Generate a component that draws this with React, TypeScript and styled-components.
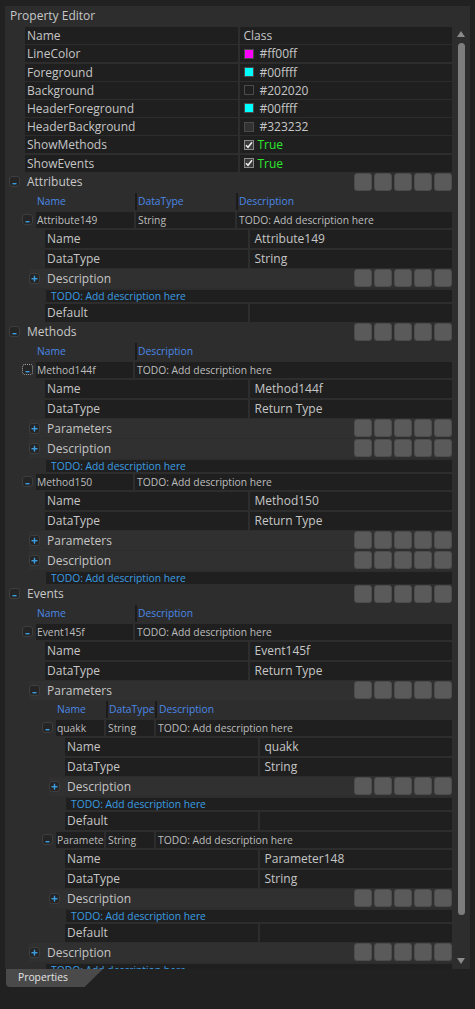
import React from "react";
import styled, { createGlobalStyle } from "styled-components";

const GlobalStyle = createGlobalStyle`
  html, body {
    margin: 0;
    padding: 0;
    background: #212121;
  }
  body {
    font-family: "Open Sans", "Noto Sans", sans-serif;
    color: #c8c8c8;
  }
  * {
    box-sizing: border-box;
  }
`;

const Screen = styled.div`
  width: 475px;
  height: 1009px;
  padding: 6px 5px 0 5px;
  background: #212121;
  overflow: hidden;
`;

const Panel = styled.div`
  height: 963px;
  background: #2d2d2d;
  display: flex;
  flex-direction: column;
`;

const TitleBar = styled.div`
  height: 20px;
  padding-left: 5px;
  font-size: 12px;
  line-height: 19px;
  color: #c8c8c8;
`;

const Body = styled.div`
  flex: 1;
  min-height: 0;
  display: flex;
`;

const Content = styled.div`
  flex: 1;
  min-width: 0;
  overflow: hidden;
`;

const ScrollBar = styled.div`
  width: 18px;
  flex: none;
  display: flex;
  flex-direction: column;
  align-items: center;
`;

const Arrow = styled.div<{ $dir: "up" | "down" }>`
  width: 0;
  height: 0;
  border-left: 4px solid transparent;
  border-right: 4px solid transparent;
  ${({ $dir }) =>
    $dir === "up"
      ? "border-bottom: 6px solid #8a8a8a; margin-top: 5px;"
      : "border-top: 6px solid #8a8a8a; margin-bottom: 5px;"}
`;

const Thumb = styled.div`
  width: 7px;
  flex: 1;
  margin: 6px 0 43px;
  background: #7d7d7d;
  border-radius: 4px;
`;

/* top level property rows */
const PropRow = styled.div`
  display: grid;
  grid-template-columns: 1fr 1fr;
  column-gap: 2px;
  height: 17px;
  margin: 1.2px 0 0 20px;
`;

const Cell = styled.div<{ $pad?: number; $small?: boolean; $color?: string }>`
  display: flex;
  align-items: center;
  min-width: 0;
  overflow: hidden;
  white-space: nowrap;
  background: #1f1f1f;
  padding-left: ${({ $pad }) => $pad ?? 2}px;
  font-size: ${({ $small }) => ($small ? "10.3px" : "12px")};
  color: ${({ $color }) => $color ?? "#c6c6c6"};
`;

const Swatch = styled.span<{ $color: string }>`
  width: 10px;
  height: 10px;
  margin-right: 6px;
  flex: none;
  background: ${({ $color }) => $color};
  border: 1px solid #4a4a4a;
`;

const CheckBox = styled.span`
  width: 10px;
  height: 10px;
  margin-right: 4px;
  flex: none;
  display: flex;
  align-items: center;
  justify-content: center;
  background: #3a3a3a;
  border: 1px solid #8a8a8a;
`;

const TrueText = styled.span`
  color: #2ee62e;
`;

/* section / sub headers */
const SectionHeader = styled.div`
  height: 20px;
  display: flex;
  align-items: center;
  padding-left: 4px;
  font-size: 12px;
  color: #c8c8c8;
`;

const SubHeader = styled.div<{ $level: number }>`
  height: 19px;
  display: flex;
  align-items: center;
  margin: 1px 0 0 ${({ $level }) => 24 + $level * 20}px;
  background: #303030;
  font-size: 12px;
  color: #c6c6c6;
`;

const HeaderTitle = styled.span<{ $gap: number }>`
  flex: 1;
  margin-left: ${({ $gap }) => $gap}px;
  white-space: nowrap;
`;

const ButtonGroup = styled.div`
  display: flex;
  gap: 2px;
`;

const ToolButton = styled.div`
  width: 18px;
  height: 18px;
  border-radius: 3px;
  background: #5a5a5a;
  border: 1px solid #4c4c4c;
`;

const ToggleBox = styled.span<{ $focus?: boolean }>`
  width: 11px;
  height: 11px;
  flex: none;
  display: flex;
  border-radius: 3px;
  background: #252525;
  border: 1px ${({ $focus }) => ($focus ? "dotted #a8a8a8" : "solid #3e3e3e")};
`;

/* column headers and item rows */
const ColumnHeader = styled.div<{ $level: number; $cols: string }>`
  display: grid;
  grid-template-columns: ${({ $cols }) => $cols};
  height: 17px;
  margin: 1px 0 0 ${({ $level }) => 31 + $level * 20}px;
  font-size: 10.3px;
  line-height: 17px;
  color: #4a88e6;
`;

const HeaderCell = styled.div<{ $first?: boolean; $pad?: number }>`
  padding-left: ${({ $pad }) => $pad ?? 1}px;
  border-left: ${({ $first }) => ($first ? "none" : "2px solid #1b1b1b")};
  white-space: nowrap;
  overflow: hidden;
`;

const ItemRow = styled.div<{ $level: number }>`
  display: flex;
  align-items: center;
  height: 16px;
  margin: 2px 0 0 ${({ $level }) => 17 + $level * 20}px;
`;

const ItemCells = styled.div<{ $cols: string }>`
  flex: 1;
  height: 100%;
  margin-left: 3px;
  display: grid;
  grid-template-columns: ${({ $cols }) => $cols};
  column-gap: 2px;
`;

const DetailRow = styled.div<{ $level: number }>`
  display: grid;
  grid-template-columns: 1fr 1fr;
  column-gap: 2px;
  height: 18px;
  margin: 2px 0 0 ${({ $level }) => 40 + $level * 20}px;
`;

const DescLine = styled.div<{ $level: number }>`
  height: 12px;
  margin: 2px 0 0 ${({ $level }) => 41 + $level * 20}px;
  padding-left: 5px;
  background: #1f1f1f;
  font-size: 10.3px;
  line-height: 12px;
  color: #3a9de2;
  white-space: nowrap;
  overflow: hidden;
`;

/* bottom tab */
const TabStrip = styled.div`
  height: 40px;
  padding-left: 1px;
`;

const Tab = styled.div`
  width: 97px;
  height: 18px;
  padding-left: 12px;
  background: #4a4a4a;
  border-bottom-left-radius: 4px;
  clip-path: polygon(0 0, 100% 0, 81% 100%, 0 100%);
  font-size: 10.3px;
  line-height: 17px;
  color: #e4e4e4;
`;

const TODO = "TODO: Add description here";

const Toggle = ({ open, focus }: { open: boolean; focus?: boolean }) => (
  <ToggleBox $focus={focus}>
    <svg width="9" height="9" viewBox="0 0 9 9">
      {open ? (
        <rect x="2.5" y="6" width="4" height="1.4" fill="#3a9de2" />
      ) : (
        <>
          <rect x="1.5" y="4" width="6" height="1.4" fill="#3a9de2" />
          <rect x="3.8" y="1.7" width="1.4" height="6" fill="#3a9de2" />
        </>
      )}
    </svg>
  </ToggleBox>
);

const Buttons = () => (
  <ButtonGroup>
    {[0, 1, 2, 3, 4].map((i) => (
      <ToolButton key={i} />
    ))}
  </ButtonGroup>
);

const Section = ({ title }: { title: string }) => (
  <SectionHeader>
    <Toggle open />
    <HeaderTitle $gap={7}>{title}</HeaderTitle>
    <Buttons />
  </SectionHeader>
);

const Sub = ({ title, level, open }: { title: string; level: number; open?: boolean }) => (
  <SubHeader $level={level}>
    <Toggle open={!!open} />
    <HeaderTitle $gap={7}>{title}</HeaderTitle>
    <Buttons />
  </SubHeader>
);

const Detail = ({ name, value, level }: { name: string; value: string; level: number }) => (
  <DetailRow $level={level}>
    <Cell>{name}</Cell>
    <Cell $pad={5}>{value}</Cell>
  </DetailRow>
);

const Item = ({
  cells,
  cols,
  level,
  focus,
}: {
  cells: string[];
  cols: string;
  level: number;
  focus?: boolean;
}) => (
  <ItemRow $level={level}>
    <Toggle open focus={focus} />
    <ItemCells $cols={cols}>
      {cells.map((c, i) => (
        <Cell key={i} $small $pad={i === 0 ? 1 : 2} $color="#bdbdbd">
          {c}
        </Cell>
      ))}
    </ItemCells>
  </ItemRow>
);

const Columns = ({ names, cols, level }: { names: string[]; cols: string; level: number }) => (
  <ColumnHeader $level={level} $cols={cols}>
    {names.map((n, i) => (
      <HeaderCell key={n} $first={i === 0} $pad={i === 2 && level === 1 ? 2 : 1}>
        {n}
      </HeaderCell>
    ))}
  </ColumnHeader>
);

const Check = () => (
  <CheckBox>
    <svg width="8" height="8" viewBox="0 0 8 8">
      <path d="M1 4.2 L3 6.3 L7 1.2" stroke="#f0f0f0" strokeWidth="1.5" fill="none" />
    </svg>
  </CheckBox>
);

type Prop = { name: string; value: string; swatch?: string; check?: boolean };

const props: Prop[] = [
  { name: "Name", value: "Class" },
  { name: "LineColor", value: "#ff00ff", swatch: "#ff00ff" },
  { name: "Foreground", value: "#00ffff", swatch: "#00ffff" },
  { name: "Background", value: "#202020", swatch: "#202020" },
  { name: "HeaderForeground", value: "#00ffff", swatch: "#00ffff" },
  { name: "HeaderBackground", value: "#323232", swatch: "#323232" },
  { name: "ShowMethods", value: "True", check: true },
  { name: "ShowEvents", value: "True", check: true },
];

const COLS3 = "98px 99px 1fr";
const COLS2 = "97px 1fr";
const HEAD3 = "99px 101px 1fr";
const HEAD2 = "99px 1fr";
const NCOLS3 = "48px 48px 1fr";
const NHEAD3 = "50px 49px 1fr";

const App = () => (
  <>
    <GlobalStyle />
    <Screen>
      <Panel>
        <TitleBar>Property Editor</TitleBar>
        <Body>
          <Content>
            {props.map((p) => (
              <PropRow key={p.name}>
                <Cell>{p.name}</Cell>
                <Cell $pad={4}>
                  {p.swatch && <Swatch $color={p.swatch} />}
                  {p.check && <Check />}
                  {p.check ? <TrueText>{p.value}</TrueText> : p.value}
                </Cell>
              </PropRow>
            ))}

            <Section title="Attributes" />
            <Columns names={["Name", "DataType", "Description"]} cols={HEAD3} level={0} />
            <Item cells={["Attribute149", "String", TODO]} cols={COLS3} level={0} />
            <Detail name="Name" value="Attribute149" level={0} />
            <Detail name="DataType" value="String" level={0} />
            <Sub title="Description" level={0} />
            <DescLine $level={0}>{TODO}</DescLine>
            <Detail name="Default" value="" level={0} />

            <Section title="Methods" />
            <Columns names={["Name", "Description"]} cols={HEAD2} level={0} />
            <Item cells={["Method144f", TODO]} cols={COLS2} level={0} focus />
            <Detail name="Name" value="Method144f" level={0} />
            <Detail name="DataType" value="Return Type" level={0} />
            <Sub title="Parameters" level={0} />
            <Sub title="Description" level={0} />
            <DescLine $level={0}>{TODO}</DescLine>
            <Item cells={["Method150", TODO]} cols={COLS2} level={0} />
            <Detail name="Name" value="Method150" level={0} />
            <Detail name="DataType" value="Return Type" level={0} />
            <Sub title="Parameters" level={0} />
            <Sub title="Description" level={0} />
            <DescLine $level={0}>{TODO}</DescLine>

            <Section title="Events" />
            <Columns names={["Name", "Description"]} cols={HEAD2} level={0} />
            <Item cells={["Event145f", TODO]} cols={COLS2} level={0} />
            <Detail name="Name" value="Event145f" level={0} />
            <Detail name="DataType" value="Return Type" level={0} />
            <Sub title="Parameters" level={0} open />
            <Columns names={["Name", "DataType", "Description"]} cols={NHEAD3} level={1} />
            <Item cells={["quakk", "String", TODO]} cols={NCOLS3} level={1} />
            <Detail name="Name" value="quakk" level={1} />
            <Detail name="DataType" value="String" level={1} />
            <Sub title="Description" level={1} />
            <DescLine $level={1}>{TODO}</DescLine>
            <Detail name="Default" value="" level={1} />
            <Item cells={["Parameter148", "String", TODO]} cols={NCOLS3} level={1} />
            <Detail name="Name" value="Parameter148" level={1} />
            <Detail name="DataType" value="String" level={1} />
            <Sub title="Description" level={1} />
            <DescLine $level={1}>{TODO}</DescLine>
            <Detail name="Default" value="" level={1} />
            <Sub title="Description" level={0} />
            <DescLine $level={0}>{TODO}</DescLine>
          </Content>
          <ScrollBar>
            <Arrow $dir="up" />
            <Thumb />
            <Arrow $dir="down" />
          </ScrollBar>
        </Body>
      </Panel>
      <TabStrip>
        <Tab>Properties</Tab>
      </TabStrip>
    </Screen>
  </>
);

export default App;
